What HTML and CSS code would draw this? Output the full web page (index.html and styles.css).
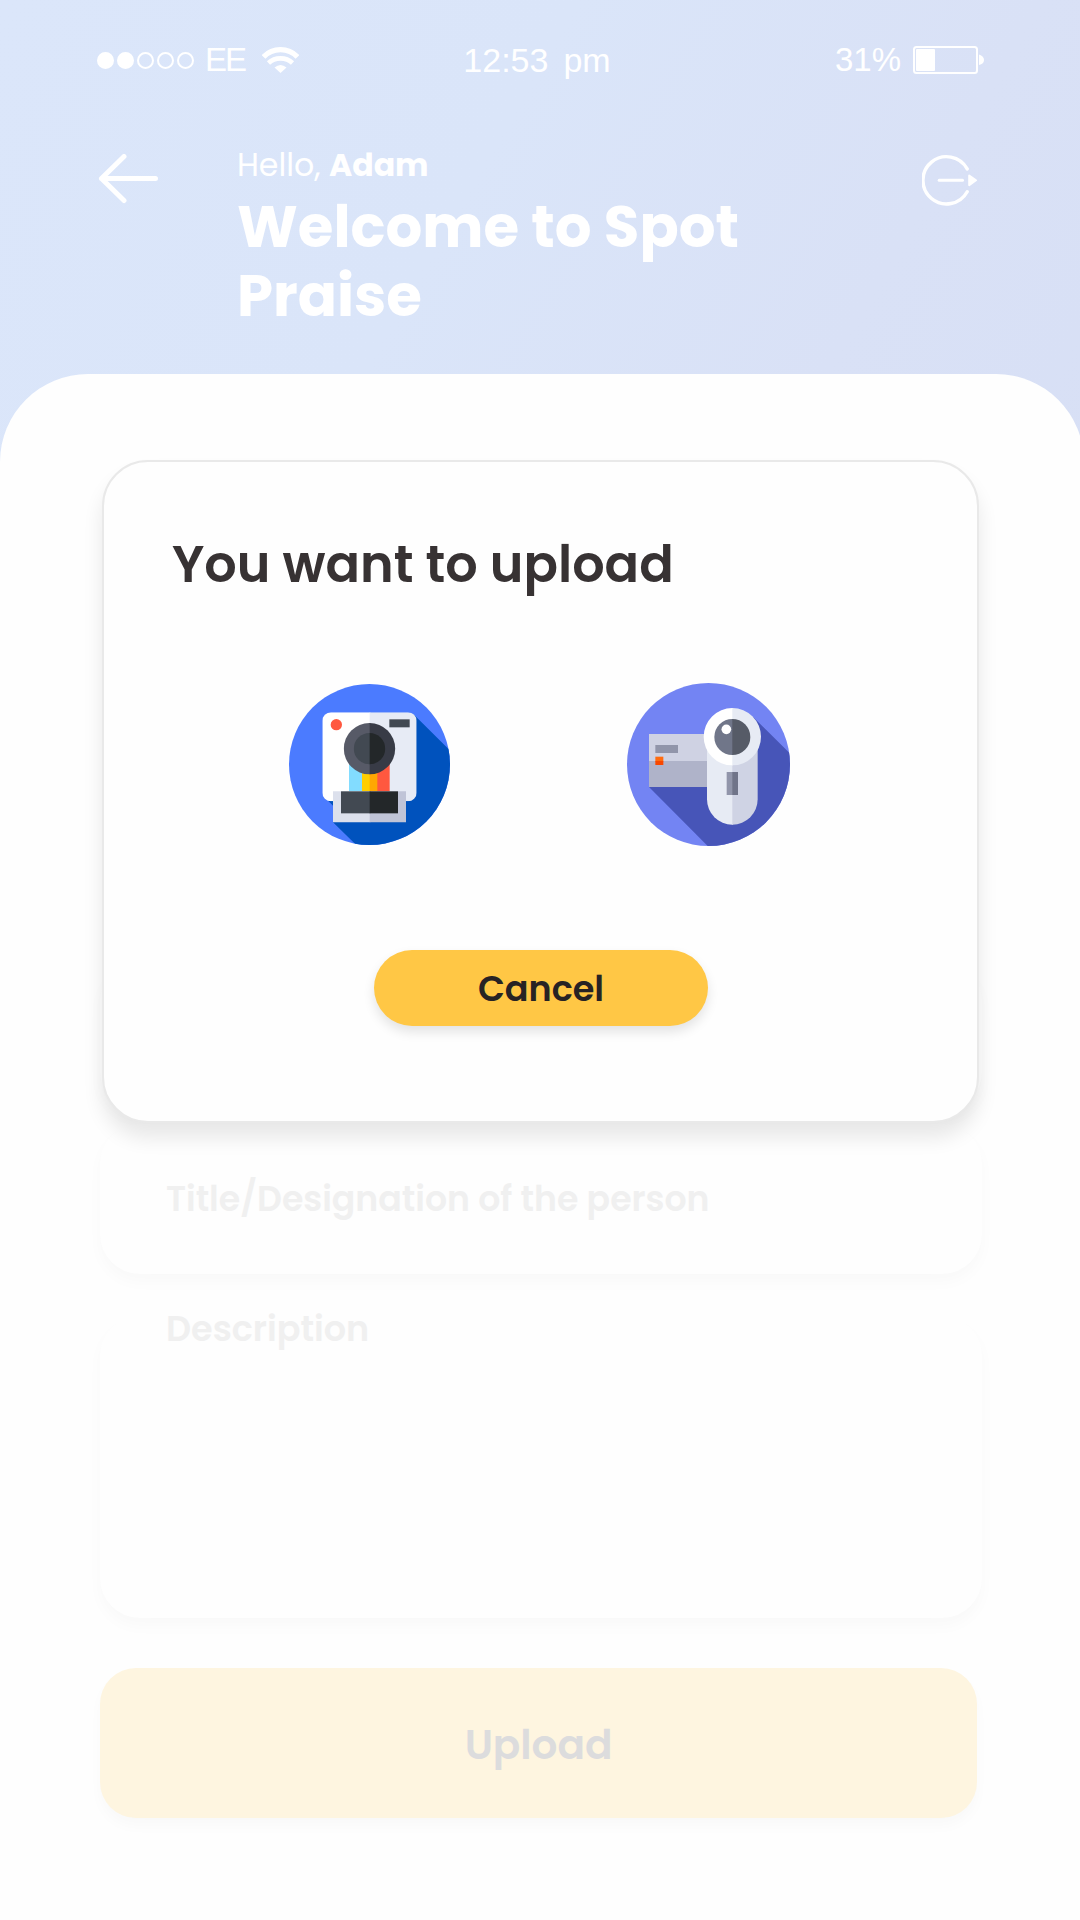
FILE: index.html
```html
<!DOCTYPE html>
<html lang="en">
<head>
<meta charset="utf-8">
<title>Spot Praise</title>
<link rel="stylesheet" href="styles.css">
</head>
<body>
<div class="screen">
  <div class="status">
    <div class="carrier">
      <span class="signal"><i class="dot full"></i><i class="dot full"></i><i class="dot"></i><i class="dot"></i><i class="dot"></i></span>
      <span class="network">EE</span>
      <svg class="wifi" viewBox="0 0 37 26" fill="none" stroke="#fff"><path d="M1.500 10C10.500 .2 26.500 .2 35.500 10" stroke-width="5.200"/><path d="M6.500 16C13 9.800 24 9.800 30.500 16" stroke-width="4.600"/><path d="M12.500 20.500Q18.500 15.500 24.500 20.500L18.500 26Z" fill="#fff" stroke="none"/></svg>
    </div>
    <div class="time"><span class="clock">12:53</span><span class="meridiem">pm</span></div>
    <div class="power"><span class="percent">31%</span>
      <svg class="battery" viewBox="0 0 71 28"><rect x="1" y="1" width="63" height="26" rx="2.500" fill="none" stroke="#fff" stroke-width="2"/><rect x="3" y="3" width="19" height="22" rx="1" fill="#fff"/><path d="M66 8.500Q71 10 71 14T66 19Z" fill="#fff"/></svg>
    </div>
  </div>
  <header class="header">
    <svg class="back" viewBox="0 0 60 50" fill="none" stroke="#fff" stroke-width="5" stroke-linecap="round" stroke-linejoin="round"><path d="M26 2.500L3.500 24.500L26 46.500M3.500 24.500H57.500"/></svg>
    <div class="greeting">
      <p class="hello">Hello, <b>Adam</b></p>
      <h1>Welcome to Spot<br>Praise</h1>
    </div>
    <svg class="logout" viewBox="0 0 56 52"><path d="M45.200 14.900A23.600 23.600 0 1 0 45.200 37.700" fill="none" stroke="#fff" stroke-width="3.400" stroke-linecap="round"/><path d="M17.200 26.300H40.500" stroke="#fff" stroke-width="3" stroke-linecap="round"/><path d="M47.200 21.500L54 26.300L47.200 31.100Z" fill="#fff" stroke="#fff" stroke-width="2" stroke-linejoin="round"/></svg>
  </header>
  <main class="sheet">
    <div class="field name-field"></div>
    <div class="field title-field">Title/Designation of the person</div>
    <div class="field description-field">Description</div>
    <button class="upload">Upload</button>
  </main>
  <section class="modal">
    <h2>You want to upload</h2>
    <div class="choices">
      <svg class="photo" viewBox="57 41 483 483">
        <defs><clipPath id="disc"><circle cx="298.500" cy="282.500" r="241.500"/></clipPath><clipPath id="cam"><rect x="157" y="126" width="283" height="267" rx="26"/></clipPath><clipPath id="lens"><circle cx="298.500" cy="235" r="77"/></clipPath><clipPath id="core"><circle cx="298.500" cy="235" r="47"/></clipPath></defs>
        <g clip-path="url(#disc)"><path fill="#4b7bff" d="M57 41H540V524H57Z"/><path fill="#0052bd" d="M432 133L560 260V540H275L189 456V406L170 387Z"/></g>
        <g clip-path="url(#cam)"><path fill="#fff" d="M157 126H301V393H157Z"/><path fill="#e7ebf5" d="M299 126H440V393H299Z"/></g>
        <circle cx="199" cy="163" r="17" fill="#ff583f"/><path fill="#424952" d="M358 147H419V171H358Z"/>
        <path fill="#82dcff" d="M237 270H278V363H237Z"/><path fill="#ffce00" d="M276 270H301V363H276Z"/><path fill="#ffa702" d="M299 270H324V363H299Z"/><path fill="#ff583f" d="M322 270H359V363H322Z"/>
        <g clip-path="url(#lens)"><path fill="#575a67" d="M220 150H301V320H220Z"/><path fill="#383b46" d="M299 150H380V320H299Z"/></g>
        <g clip-path="url(#core)"><path fill="#424952" d="M250 180H301V290H250Z"/><path fill="#232729" d="M299 180H350V290H299Z"/></g>
        <path fill="#dce0ec" d="M189 363H301V456H189Z"/><path fill="#c0c4d7" d="M299 363H408V456H299Z"/><path fill="#424952" d="M213 363H301V429H213Z"/><path fill="#232729" d="M299 363H384V429H299Z"/>
      </svg>
      <svg class="video" viewBox="51 39 489 489">
        <defs><clipPath id="disc2"><circle cx="295.500" cy="283.500" r="244.500"/></clipPath></defs>
        <g clip-path="url(#disc2)"><path fill="#7384f3" d="M51 39H540V528H51Z"/><path fill="#4755b8" d="M430 142L560 270V540H305L117 351L300 250Z"/></g>
        <path fill="#cfd2e3" d="M117 192H300V275H117Z"/><path fill="#afb3c9" d="M117 273H300V351H117Z"/><path fill="#9195aa" d="M136 225H204V249H136Z"/><path fill="#ff6b10" d="M136 260H160V275H136Z"/><path fill="#f84700" d="M136 273H160V285H136Z"/>
        <path fill="#e7ebf4" d="M291 200H369V464H367A76 76 0 0 1 291 388Z"/><path fill="#cfd3e4" d="M367 200H443V388A76 76 0 0 1 367 464Z"/>
        <path fill="#fff" d="M369 114H367A86 86 0 0 0 367 286H369Z"/><path fill="#e7ebf4" d="M367 114A86 86 0 0 1 367 286Z"/>
        <path fill="#707689" d="M369 147H367A54 54 0 0 0 367 255H369Z"/><path fill="#565b67" d="M367 147A54 54 0 0 1 367 255Z"/><circle cx="349" cy="178" r="14.500" fill="#fff"/>
        <path fill="#9195aa" d="M350 306H369V375H350Z"/><path fill="#707489" d="M367 306H384V375H367Z"/>
      </svg>
    </div>
    <button class="cancel">Cancel</button>
  </section>
</div>
</body>
</html>
```
FILE: styles.css
```css
* { box-sizing: border-box; }
body { margin: 0; }
h1, h2, p { margin: 0; }
button { border: 0; font-family: inherit; }
svg { display: block; flex: none; }

.screen {
  position: relative;
  width: 1080px;
  height: 1920px;
  overflow: hidden;
  display: flex;
  flex-direction: column;
  background: linear-gradient(120deg, #dbe6fa 0, #dae5f9 500px, #d9e1f6 900px, #d7dff5 1300px);
  font-family: Poppins, Inter, sans-serif;
  color: #fff;
}

.status {
  height: 120px;
  padding: 0 96px 0 97px;
  display: grid;
  grid-template-columns: 1fr auto 1fr;
  font: 33px/120px "Liberation Sans", sans-serif;
}
.carrier, .time, .power { display: flex; align-items: center; }
.signal { display: flex; gap: 3px; }
.dot { width: 17px; height: 17px; border: 2px solid #fff; border-radius: 50%; }
.full { background: #fff; }
.network { margin-left: 11px; letter-spacing: -2px; }
.wifi { width: 37px; height: 26px; margin-left: 17px; }
.time { padding-right: 7px; font-size: 34px; }
.meridiem { margin-left: 15px; }
.power { justify-content: flex-end; }
.battery { width: 71px; height: 28px; margin-left: 12px; }

.header {
  height: 254px;
  padding: 0 102px 0 98px;
  display: flex;
  align-items: flex-start;
}
.back { width: 60px; height: 50px; margin-top: 34px; }
.greeting { flex: 1; margin-left: 79px; padding-top: 25px; }
.hello { font-size: 31.6px; line-height: 40px; font-weight: 400; }
.hello b { font-weight: 700; }
h1 { margin-top: 8px; font-size: 57.8px; line-height: 68.5px; font-weight: 700; }
.logout { width: 56px; height: 52px; margin-top: 34px; }

.sheet {
  flex: 1;
  margin-right: -4px;
  padding: 587px 102px 0 100px;
  border-radius: 88px 88px 0 0;
  background: #fefefe;
}
.field {
  border-radius: 40px;
  background: #fefefe;
  box-shadow: 0 8px 16px rgba(0, 0, 0, .025);
  color: #f0f0f0;
  font-size: 34.7px;
  font-weight: 600;
}
.name-field { height: 150px; }
.title-field { height: 150px; margin-top: 13px; padding: 55px 66px; line-height: 40px; }
.description-field { height: 302px; margin-top: 42px; padding: 0 66px; font-size: 35px; line-height: 26px; }
.upload {
  width: 877px;
  height: 150px;
  margin-top: 50px;
  padding: 3px 0 0;
  border-radius: 36px;
  background: #fef5e0;
  box-shadow: 0 8px 14px rgba(0, 0, 0, .025);
  color: #dcdcdd;
  font-size: 40.5px;
  font-weight: 600;
}

.modal {
  position: absolute;
  left: 102px;
  top: 460px;
  width: 877px;
  height: 663px;
  display: flex;
  flex-direction: column;
  border: 2px solid #e9e9e9;
  border-radius: 46px;
  background: #fefefe;
  box-shadow: 0 15px 20px rgba(0, 0, 0, .09);
}
h2 { padding: 73px 0 0 68px; color: #373233; font-size: 50.9px; line-height: 60px; font-weight: 600; }
.choices { height: 163px; margin-top: 88px; padding-left: 185px; display: flex; align-items: center; gap: 177px; }
.photo { width: 161px; height: 161px; }
.video { width: 163px; height: 163px; }
.cancel {
  width: 334px;
  height: 76px;
  margin: 104px 0 0 270px;
  padding: 0;
  border-radius: 38px;
  background: #ffc745;
  box-shadow: 0 6px 12px rgba(0, 0, 0, .11);
  color: #272324;
  font-size: 35px;
  font-weight: 600;
}
```
